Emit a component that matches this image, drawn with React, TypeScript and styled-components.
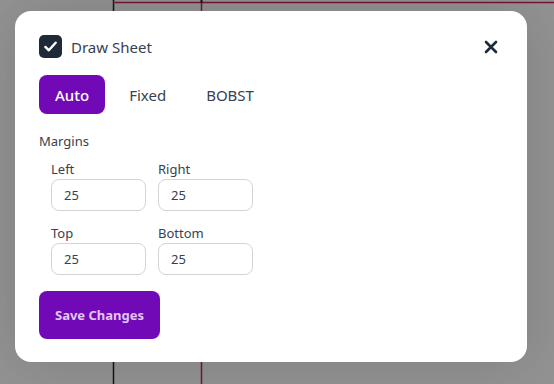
import * as React from 'react';
import styled, { createGlobalStyle } from 'styled-components';

const GlobalStyle = createGlobalStyle`
  html, body {
    margin: 0;
    padding: 0;
    width: 554px;
    height: 384px;
    overflow: hidden;
    font-family: "Noto Sans", "Open Sans", sans-serif;
  }
`;

const App = (): JSX.Element => {
  const [mode, setMode] = React.useState('Auto');
  const [checked, setChecked] = React.useState(true);
  const [margins, setMargins] = React.useState({ left: '25', right: '25', top: '25', bottom: '25' });

  const fields: { key: keyof typeof margins; label: string }[] = [
    { key: 'left', label: 'Left' },
    { key: 'right', label: 'Right' },
    { key: 'top', label: 'Top' },
    { key: 'bottom', label: 'Bottom' },
  ];

  return (
    <Screen>
      <GlobalStyle />
      <SheetDrawing width="554" height="384" viewBox="0 0 554 384">
        <line x1="113.5" y1="0" x2="113.5" y2="384" stroke="#151515" strokeWidth="1.5" />
        <line x1="113" y1="2.5" x2="554" y2="2.5" stroke="#7a1434" strokeWidth="1.5" />
        <line x1="201.5" y1="3" x2="201.5" y2="384" stroke="#7a1434" strokeWidth="1.5" />
        <line x1="201.5" y1="0" x2="201.5" y2="3" stroke="#151515" strokeWidth="2" />
      </SheetDrawing>
      <Overlay>
        <Modal>
          <Header>
            <CheckLabel>
              <CheckBox $checked={checked} onClick={() => setChecked(!checked)}>
                {checked && (
                  <svg width="15" height="15" viewBox="0 0 16 16">
                    <path d="M2.5 8.5 L6.2 12 L13.5 4" fill="none" stroke="#fff" strokeWidth="2.6" strokeLinecap="round" strokeLinejoin="round" />
                  </svg>
                )}
              </CheckBox>
              <Title>Draw Sheet</Title>
            </CheckLabel>
            <CloseButton aria-label="Close">
              <svg width="14" height="14" viewBox="0 0 14 14">
                <path d="M2 2 L12 12 M12 2 L2 12" stroke="#1e293b" strokeWidth="2.6" strokeLinecap="round" />
              </svg>
            </CloseButton>
          </Header>

          <Tabs>
            {['Auto', 'Fixed', 'BOBST'].map((t) => (
              <Tab key={t} $active={mode === t} onClick={() => setMode(t)}>
                {t}
              </Tab>
            ))}
          </Tabs>

          <SectionLabel>Margins</SectionLabel>
          <MarginGrid>
            {fields.map((f) => (
              <Field key={f.key}>
                <FieldLabel>{f.label}</FieldLabel>
                <Input
                  value={margins[f.key]}
                  onChange={(e) => setMargins({ ...margins, [f.key]: e.target.value })}
                />
              </Field>
            ))}
          </MarginGrid>

          <SaveButton>Save Changes</SaveButton>
        </Modal>
      </Overlay>
    </Screen>
  );
};

const Screen = styled.div`
  position: relative;
  width: 554px;
  height: 384px;
  background: #939393;
  overflow: hidden;
`;

const SheetDrawing = styled.svg`
  position: absolute;
  inset: 0;
`;

const Overlay = styled.div`
  position: absolute;
  inset: 0;
  display: flex;
  align-items: flex-start;
  padding: 11px 0 0 15px;
`;

const Modal = styled.div`
  width: 512px;
  box-sizing: border-box;
  background: #fff;
  border-radius: 16px;
  padding: 24px 29px 23px 24px;
  display: flex;
  flex-direction: column;
  box-shadow: 0 0 60px rgba(0, 0, 0, 0.14);
`;

const Header = styled.div`
  display: flex;
  align-items: center;
  justify-content: space-between;
  height: 23px;
`;

const CheckLabel = styled.label`
  display: flex;
  align-items: center;
  gap: 9px;
  cursor: pointer;
`;

const CheckBox = styled.span<{ $checked: boolean }>`
  width: 23px;
  height: 23px;
  border-radius: 5px;
  background: ${(p) => (p.$checked ? '#1f2937' : '#fff')};
  border: ${(p) => (p.$checked ? 'none' : '1px solid #9ca3af')};
  display: flex;
  align-items: center;
  justify-content: center;
`;

const Title = styled.span`
  font-size: 15px;
  color: #374151;
`;

const CloseButton = styled.button`
  border: none;
  background: none;
  padding: 0;
  width: 14px;
  height: 14px;
  display: flex;
  cursor: pointer;
`;

const Tabs = styled.div`
  display: flex;
  gap: 8px;
  margin-top: 17px;
`;

const Tab = styled.button<{ $active: boolean }>`
  height: 39px;
  padding: 0 16px;
  border: none;
  border-radius: 8px;
  font-family: inherit;
  font-size: 15px;
  font-weight: ${(p) => (p.$active ? 500 : 400)};
  background: ${(p) => (p.$active ? '#7209b7' : 'transparent')};
  color: ${(p) => (p.$active ? '#fff' : '#374151')};
  cursor: pointer;
`;

const SectionLabel = styled.div`
  margin-top: 18px;
  font-size: 13px;
  color: #374151;
  line-height: 18px;
`;

const MarginGrid = styled.div`
  display: grid;
  grid-template-columns: 95px 95px;
  column-gap: 12px;
  row-gap: 13px;
  margin-top: 10px;
  padding-left: 12px;
`;

const Field = styled.div`
  display: flex;
  flex-direction: column;
  gap: 1px;
`;

const FieldLabel = styled.span`
  font-size: 13px;
  line-height: 18px;
  color: #374151;
`;

const Input = styled.input`
  box-sizing: border-box;
  width: 95px;
  height: 32px;
  border: 1px solid #d4d4d8;
  border-radius: 8px;
  padding: 0 12px;
  font-family: inherit;
  font-size: 13px;
  color: #374151;
  outline: none;
`;

const SaveButton = styled.button`
  align-self: flex-start;
  margin-top: 16px;
  width: 121px;
  height: 48px;
  border: none;
  border-radius: 8px;
  background: #7209b7;
  color: #e2c6f7;
  font-family: inherit;
  font-size: 13px;
  font-weight: 700;
  cursor: pointer;
`;

export default App;
